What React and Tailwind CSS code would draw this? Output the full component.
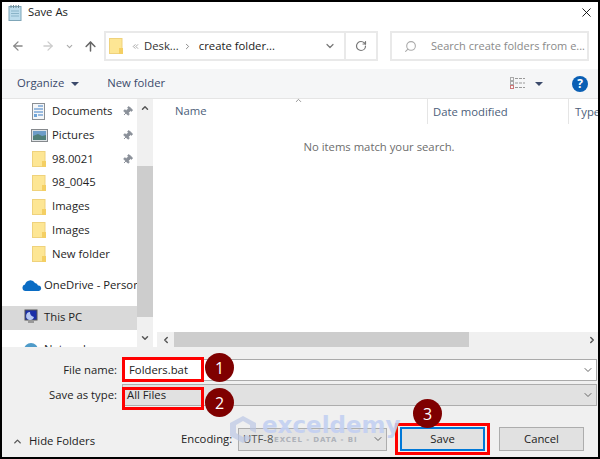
import React from "react";
import { ArrowLeft, ArrowRight, ArrowUp, ChevronDown, ChevronUp, ChevronLeft, ChevronRight, ChevronsLeft, RotateCw, Search, Pin, X } from "lucide-react";

const Folder = () => (
  <svg width="14" height="16" viewBox="0 0 14 16" className="shrink-0">
    <rect x="0.5" y="0.5" width="12.500" height="15" fill="#fde694" stroke="#efd27c" />
    <rect x="10" y="10" width="4" height="6" fill="#f4cf63" />
  </svg>
);

const DocIcon = () => (
  <svg width="14" height="17" viewBox="0 0 14 17" className="shrink-0">
    <rect x="0.5" y="0.5" width="12" height="16" fill="#f4f6f8" stroke="#8b8f94" />
    <path d="M6 3h5M2 6h9M2 9h9M6 12h5" stroke="#3f7fc4" strokeWidth="1" />
    <rect x="2" y="11" width="3" height="3" fill="#6ea4d8" />
  </svg>
);

const PicIcon = () => (
  <svg width="17" height="13" viewBox="0 0 17 13" className="shrink-0">
    <rect x="0.5" y="0.5" width="16" height="12" fill="#dfe3e6" stroke="#85898d" />
    <rect x="2" y="2" width="13" height="5" fill="#6d9dc8" />
    <path d="M2 7l5-2 4 2 4-1v5H2z" fill="#4f7f78" />
  </svg>
);

const Badge = ({ n, className }) => (
  <div className={"absolute flex h-[29px] w-[29px] items-center justify-center rounded-full bg-[#7f0000] text-[16px] text-white " + className}>
    {n}
  </div>
);

const NavItem = ({ icon, label, pin }) => (
  <div className="flex h-[23.7px] items-center pl-[27px]">
    <div className="flex w-5 justify-center">{icon}</div>
    <span className="ml-[3px] w-[70px] text-[#1f1f1f]">{label}</span>
    {pin && <Pin size={11} className="rotate-45 fill-[#8a9099] text-[#8a9099]" />}
  </div>
);

const App = () => {
  return (
    <div className="flex h-[459px] w-[600px] flex-col overflow-hidden border-2 border-black bg-white text-[11.3px] text-[#333] [font-family:'Open_Sans',sans-serif]">
      {/* title bar */}
      <div className="flex h-[21px] shrink-0 items-center pl-[6px] pr-[3px]">
        <svg width="15" height="16" viewBox="0 0 15 16" className="shrink-0">
          <rect x="1" y="1.500" width="12" height="14" fill="#bcdcec" stroke="#7fa6b8" />
          <path d="M3 0v3M5.500 0v3M8 0v3M10.500 0v3" stroke="#6f8a96" />
          <path d="M3 6h8M3 8.500h8M3 11h8" stroke="#8ab4c8" />
        </svg>
        <span className="ml-[5px] text-[#222]">Save As</span>
        <X size={15} strokeWidth={1.4} className="ml-auto mr-[1px] text-black" />
      </div>

      {/* address bar */}
      <div className="flex h-[46px] shrink-0 items-center">
        <ArrowLeft size={14} strokeWidth={2.2} className="ml-[9px] text-[#888]" />
        <ArrowRight size={14} strokeWidth={2.2} className="ml-[16px] text-[#ccc]" />
        <ChevronDown size={9} strokeWidth={3} className="ml-[10px] text-[#aaa]" />
        <ArrowUp size={15} strokeWidth={2.4} className="ml-[9px] text-[#666]" />
        <div className="ml-[6px] flex h-[30px] w-[274px] items-center border-2 border-[#e9e9e9]">
          <div className="ml-[3px]"><Folder /></div>
          <ChevronsLeft size={9} className="ml-[8px] text-[#888]" />
          <span className="ml-[4px]">Desk...</span>
          <ChevronRight size={9} className="ml-[4px] text-[#666]" />
          <span className="ml-[7px] text-[#222]">create folder...</span>
          <ChevronDown size={12} strokeWidth={2.4} className="ml-auto mr-[8px] text-[#777]" />
          <div className="flex h-full w-[32px] items-center justify-center border-l-2 border-[#e9e9e9]">
            <RotateCw size={12} strokeWidth={2.4} className="text-[#777]" />
          </div>
        </div>
        <div className="ml-[12px] flex h-[30px] w-[199px] items-center border-2 border-[#e9e9e9] text-[#8a8a8a]">
          <Search size={13} className="ml-[12px] -scale-x-100 text-[#aaa]" />
          <span className="ml-[14px] whitespace-nowrap text-[11px]">Search create folders from e...</span>
        </div>
      </div>

      {/* toolbar */}
      <div className="flex h-[30px] shrink-0 items-center border-b border-[#e5e5e5] bg-[#f5f6f7] text-[#3b4a6b]">
        <span className="ml-[15px]">Organize</span>
        <span className="ml-[7px] h-0 w-0 border-x-[4px] border-t-[4px] border-x-transparent border-t-[#3b4a6b]" />
        <span className="ml-[28px]">New folder</span>
        <svg width="16" height="13" viewBox="0 0 16 13" className="ml-auto">
          <path d="M5 1.500h10M5 6h10M5 10.500h10" stroke="#999" strokeDasharray="3 1" />
          <rect x="0.5" y="0.5" width="3" height="3" fill="none" stroke="#aaa" />
          <rect x="0.5" y="4.500" width="3" height="3" fill="none" stroke="#aaa" />
          <rect x="0.5" y="8.500" width="3" height="3" fill="none" stroke="#c77" />
        </svg>
        <span className="ml-[9px] h-0 w-0 border-x-[4px] border-t-[4px] border-x-transparent border-t-[#3b4a6b]" />
        <div className="ml-[29px] mr-[10px] flex h-4 w-4 items-center justify-center rounded-full bg-[#0a5fb4] text-[12px] font-bold text-white">?</div>
      </div>

      {/* main */}
      <div className="flex min-h-0 flex-1 bg-white">
        <div className="w-[135px] shrink-0 overflow-hidden pt-[1px]">
          <NavItem icon={<DocIcon />} label="Documents" pin />
          <NavItem icon={<PicIcon />} label="Pictures" pin />
          <NavItem icon={<Folder />} label="98.0021" pin />
          <NavItem icon={<Folder />} label="98_0045" />
          <NavItem icon={<Folder />} label="Images" />
          <NavItem icon={<Folder />} label="Images" />
          <NavItem icon={<Folder />} label="New folder" />
          <div className="mt-[8px] flex h-6 items-center whitespace-nowrap pl-[20px]">
            <svg width="20" height="11" viewBox="0 0 20 11" className="shrink-0">
              <path d="M3.500 11a3.300 3.300 0 0 1-.5-6.500 5.500 5.500 0 0 1 10-1.500 4 4 0 0 1 3 2.500 2.800 2.800 0 0 1 1 5.500z" fill="#0a6cc4" />
            </svg>
            <span className="ml-[2px] text-[#222]">OneDrive - Personal</span>
          </div>
          <div className="mt-[8px] flex h-6 items-center bg-[#d9d9d9] pl-[21px]">
            <svg width="16" height="17" viewBox="0 0 16 17" className="shrink-0">
              <rect x="2" y="1" width="12" height="10" fill="#1b2fa8" stroke="#555" />
              <path d="M7 3a4 4 0 1 0 4 5 5 5 0 0 1-4-5" fill="#b7c8f2" />
              <rect x="5" y="12" width="6" height="2" fill="#999" />
            </svg>
            <span className="ml-[5px] text-[#222]">This PC</span>
          </div>
          <div className="mt-[8px] flex h-6 items-center pl-[21px]">
            <svg width="16" height="16" viewBox="0 0 16 16" className="shrink-0">
              <circle cx="8" cy="8" r="7" fill="#4f9bc9" />
            </svg>
            <span className="ml-[5px] text-[#222]">Network</span>
          </div>
        </div>

        {/* nav scrollbar */}
        <div className="flex w-[16px] shrink-0 flex-col items-center bg-[#f0f0f0]">
          <ChevronUp size={10} strokeWidth={3.5} className="mt-[4px] text-[#555]" />
          <div className="mt-[53px] h-[151px] w-full bg-[#cdcdcd]" />
          <ChevronDown size={10} strokeWidth={3.5} className="mt-auto mb-[4px] text-[#555]" />
        </div>

        {/* file list */}
        <div className="flex min-w-0 flex-1 flex-col">
          <div className="flex h-[25px] shrink-0 items-center">
            <span className="relative ml-[22px] w-[252px] text-[#4c607a]">
              Name
              <ChevronUp size={9} className="absolute left-[119px] -top-[7px] text-[#777]" />
            </span>
            <span className="h-full w-[141px] border-l border-[#e5e5e5] pl-[5px] pt-[5px] text-[#4c607a]">Date modified</span>
            <span className="h-full flex-1 overflow-hidden border-l border-[#e5e5e5] pl-[6px] pt-[5px] text-[#4c607a]">Type</span>
          </div>
          <div className="mt-[15px] flex-1 pl-[7px] text-center text-[#6d6d6d]">No items match your search.</div>
          <div className="ml-[4px] flex h-[15px] shrink-0 items-center bg-[#f0f0f0]">
            <ChevronLeft size={10} strokeWidth={3.5} className="ml-[4px] text-[#555]" />
            <div className="ml-[3px] h-full w-[295px] bg-[#cdcdcd]" />
            <ChevronRight size={10} strokeWidth={3.5} className="ml-auto mr-[1px] text-[#555]" />
          </div>
        </div>
      </div>

      {/* footer */}
      <div className="relative h-[110px] shrink-0 bg-[#f0f0f0] pt-[12px] text-[#222]">
        <div className="flex h-[22px] items-center">
          <span className="w-[115px] text-right">File name:</span>
          <div className="ml-[5px] mr-[1px] flex h-full flex-1 items-center border border-[#aaa] bg-white pl-[6px]">
            <span>Folders.bat</span>
            <ChevronDown size={12} className="ml-auto mr-[2px] text-[#666]" />
          </div>
        </div>
        <div className="mt-[3px] flex h-[22px] items-center">
          <span className="w-[115px] text-right">Save as type:</span>
          <div className="ml-[5px] mr-[1px] flex h-full flex-1 items-center border border-[#adadad] bg-[#e1e1e1] pl-[4px]">
            <span>All Files</span>
            <ChevronDown size={12} className="ml-auto mr-[2px] text-[#666]" />
          </div>
        </div>
        <div className="mt-[21px] flex h-[24px] items-center">
          <ChevronUp size={11} strokeWidth={3} className="ml-[10px] mt-[5px] text-[#555]" />
          <span className="ml-[6px] mt-[5px] w-[152px]">Hide Folders</span>
          <span className="w-[57px]">Encoding:</span>
          <div className="flex h-[23px] w-[149px] items-center border border-[#adadad] bg-[#e3e3e3] pl-[4px] text-[#555]">
            <span>UTF-8</span>
            <ChevronDown size={12} className="ml-auto mr-[2px] text-[#666]" />
          </div>
          <div className="ml-[13px] flex h-full w-[85px] items-center justify-center border-2 border-[#0078d7] bg-[#e1e1e1]">Save</div>
          <div className="ml-[14px] flex h-full w-[85px] items-center justify-center border border-[#adadad] bg-[#e1e1e1]">Cancel</div>
        </div>

        {/* annotations over the dialog */}
        <div className="absolute left-[120px] top-[10px] h-[25px] w-[82px] border-[3px] border-[#ff0000]" />
        <div className="absolute left-[120px] top-[40px] h-[23px] w-[82px] border-[3px] border-[#ff0000]" />
        <div className="absolute left-[393px] top-[76px] h-[32px] w-[95px] border-[3px] border-[#ff0000]" />
        <Badge n="1" className="left-[203px] top-[6px]" />
        <Badge n="2" className="left-[203px] top-[41px]" />
        <Badge n="3" className="left-[411px] top-[52px]" />

        {/* watermark */}
        <div className="pointer-events-none absolute left-[226px] top-[68px] flex h-[30px] w-[144px] opacity-90">
          <svg width="32" height="30" viewBox="0 0 32 30" className="shrink-0">
            <path d="M15 1l13 7v10l-6-3v-5l-7-4-7 4v8l7 4 4-2 5 3-9 5L2 21V8z" fill="#b9c6e6" opacity="0.75" />
          </svg>
          <div className="ml-[2px] flex flex-col">
            <span className="text-[23px] font-bold leading-[20px] text-[#c3d0f2] [font-family:'DejaVu_Sans',sans-serif]">exceldemy</span>
            <span className="ml-[12px] text-[7px] font-bold leading-[10px] tracking-[0.9px] text-[#a9adb5] [font-family:'DejaVu_Sans',sans-serif]">EXCEL - DATA - BI</span>
          </div>
        </div>
      </div>
    </div>
  );
};

export default App;
